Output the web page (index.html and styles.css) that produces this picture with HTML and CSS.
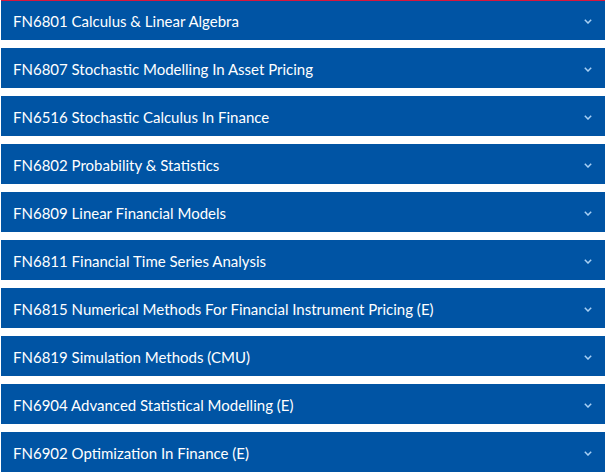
FILE: index.html
```html
<!DOCTYPE html>
<html>
<head>
<meta charset="utf-8">
<link rel="stylesheet" href="styles.css">
</head>
<body>
<div class="accordion">
  <div class="panel first"><span class="title">FN6801 Calculus &amp; Linear Algebra</span><svg class="chev" width="8" height="5" viewBox="0 0 8 5"><polyline points="0.8,0.8 4,4 7.2,0.8"/></svg></div>
  <div class="panel"><span class="title">FN6807 Stochastic Modelling In Asset Pricing</span><svg class="chev" width="8" height="5" viewBox="0 0 8 5"><polyline points="0.8,0.8 4,4 7.2,0.8"/></svg></div>
  <div class="panel"><span class="title">FN6516 Stochastic Calculus In Finance</span><svg class="chev" width="8" height="5" viewBox="0 0 8 5"><polyline points="0.8,0.8 4,4 7.2,0.8"/></svg></div>
  <div class="panel"><span class="title">FN6802 Probability &amp; Statistics</span><svg class="chev" width="8" height="5" viewBox="0 0 8 5"><polyline points="0.8,0.8 4,4 7.2,0.8"/></svg></div>
  <div class="panel"><span class="title">FN6809 Linear Financial Models</span><svg class="chev" width="8" height="5" viewBox="0 0 8 5"><polyline points="0.8,0.8 4,4 7.2,0.8"/></svg></div>
  <div class="panel"><span class="title">FN6811 Financial Time Series Analysis</span><svg class="chev" width="8" height="5" viewBox="0 0 8 5"><polyline points="0.8,0.8 4,4 7.2,0.8"/></svg></div>
  <div class="panel"><span class="title">FN6815 Numerical Methods For Financial Instrument Pricing (E)</span><svg class="chev" width="8" height="5" viewBox="0 0 8 5"><polyline points="0.8,0.8 4,4 7.2,0.8"/></svg></div>
  <div class="panel"><span class="title">FN6819 Simulation Methods (CMU)</span><svg class="chev" width="8" height="5" viewBox="0 0 8 5"><polyline points="0.8,0.8 4,4 7.2,0.8"/></svg></div>
  <div class="panel"><span class="title">FN6904 Advanced Statistical Modelling (E)</span><svg class="chev" width="8" height="5" viewBox="0 0 8 5"><polyline points="0.8,0.8 4,4 7.2,0.8"/></svg></div>
  <div class="panel"><span class="title">FN6902 Optimization In Finance (E)</span><svg class="chev" width="8" height="5" viewBox="0 0 8 5"><polyline points="0.8,0.8 4,4 7.2,0.8"/></svg></div>
</div>
</body>
</html>
```
FILE: styles.css
```css
html, body {
  margin: 0;
  padding: 0;
  background: #ffffff;
}
.accordion {
  display: flex;
  flex-direction: column;
  gap: 8px;
  margin: 0 1px;
  font-family: Lato, "Open Sans", sans-serif;
}
.panel {
  box-sizing: border-box;
  height: 40px;
  background: #0054a4;
  display: flex;
  align-items: center;
  justify-content: space-between;
  padding: 2px 13px 0 12px;
}
.panel.first {
  border-top: 1px solid #d8173e;
  padding-top: 1px;
}
.title {
  color: #ffffff;
  font-size: 15px;
  line-height: 1;
}
.chev {
  fill: none;
  stroke: #a8d0f4;
  stroke-width: 1.5;
  margin-top: 0;
}
```
